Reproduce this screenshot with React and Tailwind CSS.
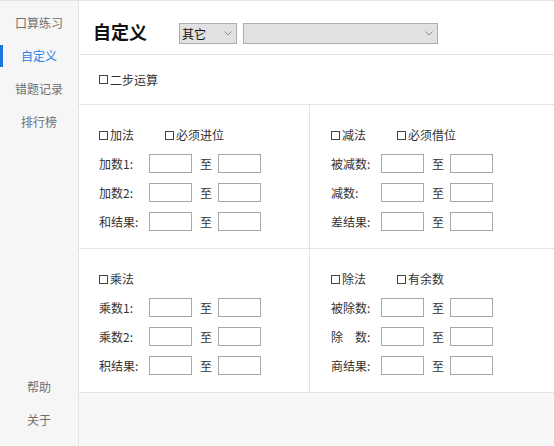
import { useState } from "react";

const font = "font-['Microsoft_YaHei','Noto_Sans_CJK_SC',sans-serif]";

function Chevron() {
  return (
    <svg width="8" height="5" viewBox="0 0 8 5" className="shrink-0">
      <path d="M0.5 0.5 L4 4 L7.5 0.5" fill="none" stroke="#8a8a8a" strokeWidth="1" />
    </svg>
  );
}

function Check({ label, wide }) {
  return (
    <div className={`flex items-center h-[14px] ${wide ? "w-[66px]" : ""}`}>
      <span className="w-[9px] h-[9px] border border-[#444] bg-white shrink-0" />
      <span className="ml-[2px] leading-[14px]">{label}</span>
    </div>
  );
}

function RangeRow({ label }) {
  return (
    <div className="flex items-center h-[19px] mt-[10px] first:mt-0">
      <span className="w-[50px] leading-[19px] whitespace-pre">{label}</span>
      <input className="w-[43px] h-[19px] border border-[#a8a8a8] bg-white outline-none" />
      <span className="ml-[8px] w-[12px] leading-[19px]">至</span>
      <input className="ml-[6px] w-[43px] h-[19px] border border-[#a8a8a8] bg-white outline-none" />
    </div>
  );
}

function Cell({ checks, rows, border }) {
  return (
    <div className={`h-[143px] bg-white pt-[23px] ${border ? "border-r border-[#e3e3e3] pl-[20px]" : "pl-[21px]"}`}>
      <div className="flex items-center">
        {checks.map((c, i) => (
          <Check key={c} label={c} wide={i === 0 && checks.length > 1} />
        ))}
      </div>
      <div className="mt-[12px] flex flex-col">
        {rows.map((r) => (
          <RangeRow key={r} label={r} />
        ))}
      </div>
    </div>
  );
}

export default function App() {
  const [active] = useState(1);
  const menu = ["口算练习", "自定义", "错题记录", "排行榜"];

  return (
    <div className={`flex w-[554px] h-[446px] border-t border-[#e3e3e3] text-[12px] text-[#333] ${font}`}>

      {/* SIDEBAR */}
      <div className="w-[79px] shrink-0 bg-[#f6f6f6] border-r border-[#e3e3e3] flex flex-col justify-between pt-[5px] pb-[10px]">
        <div>
          {menu.map((m, i) => (
            <div
              key={m}
              className={`relative h-[33px] flex items-center justify-center text-[12px] ${i === active ? "text-[#2d7fe3]" : "text-[#707070]"}`}
            >
              {i === active && <span className="absolute left-0 top-[6px] w-[3px] h-[22px] bg-[#1a78e0]" />}
              {m}
            </div>
          ))}
        </div>
        <div>
          <div className="h-[33px] flex items-center justify-center text-[12px] text-[#707070]">帮助</div>
          <div className="h-[33px] flex items-center justify-center text-[12px] text-[#707070]">关于</div>
        </div>
      </div>

      {/* MAIN */}
      <div className="flex-1 flex flex-col bg-[#f8f8f8]">

        {/* HEADER */}
        <div className="h-[54px] bg-white border-b border-[#e3e3e3] flex items-start pt-[18px] pl-[14px]">
          <span className="text-[18px] font-bold leading-[24px] text-[#111]">自定义</span>
          <div className="ml-[32px] mt-[4px] w-[58px] h-[21px] bg-[#e1e1e1] border border-[#adadad] flex items-center justify-between pl-[2px] pr-[4px] text-[12px] text-[#111]">
            <span>其它</span>
            <Chevron />
          </div>
          <div className="ml-[6px] mt-[4px] w-[195px] h-[21px] bg-[#e1e1e1] border border-[#adadad] flex items-center justify-end pr-[4px]">
            <Chevron />
          </div>
        </div>

        {/* 二步运算 */}
        <div className="h-[50px] bg-white border-b border-[#e3e3e3] flex items-center pl-[20px]">
          <Check label="二步运算" />
        </div>

        {/* GRID */}
        <div className="grid grid-cols-[231px_1fr] border-b border-[#e3e3e3]">
          <div className="border-b border-[#e3e3e3]">
            <Cell border checks={["加法", "必须进位"]} rows={["加数1:", "加数2:", "和结果:"]} />
          </div>
          <div className="border-b border-[#e3e3e3]">
            <Cell checks={["减法", "必须借位"]} rows={["被减数:", "减数:", "差结果:"]} />
          </div>
          <Cell border checks={["乘法"]} rows={["乘数1:", "乘数2:", "积结果:"]} />
          <Cell checks={["除法", "有余数"]} rows={["被除数:", "除\u3000数:", "商结果:"]} />
        </div>

      </div>

    </div>
  );
}
